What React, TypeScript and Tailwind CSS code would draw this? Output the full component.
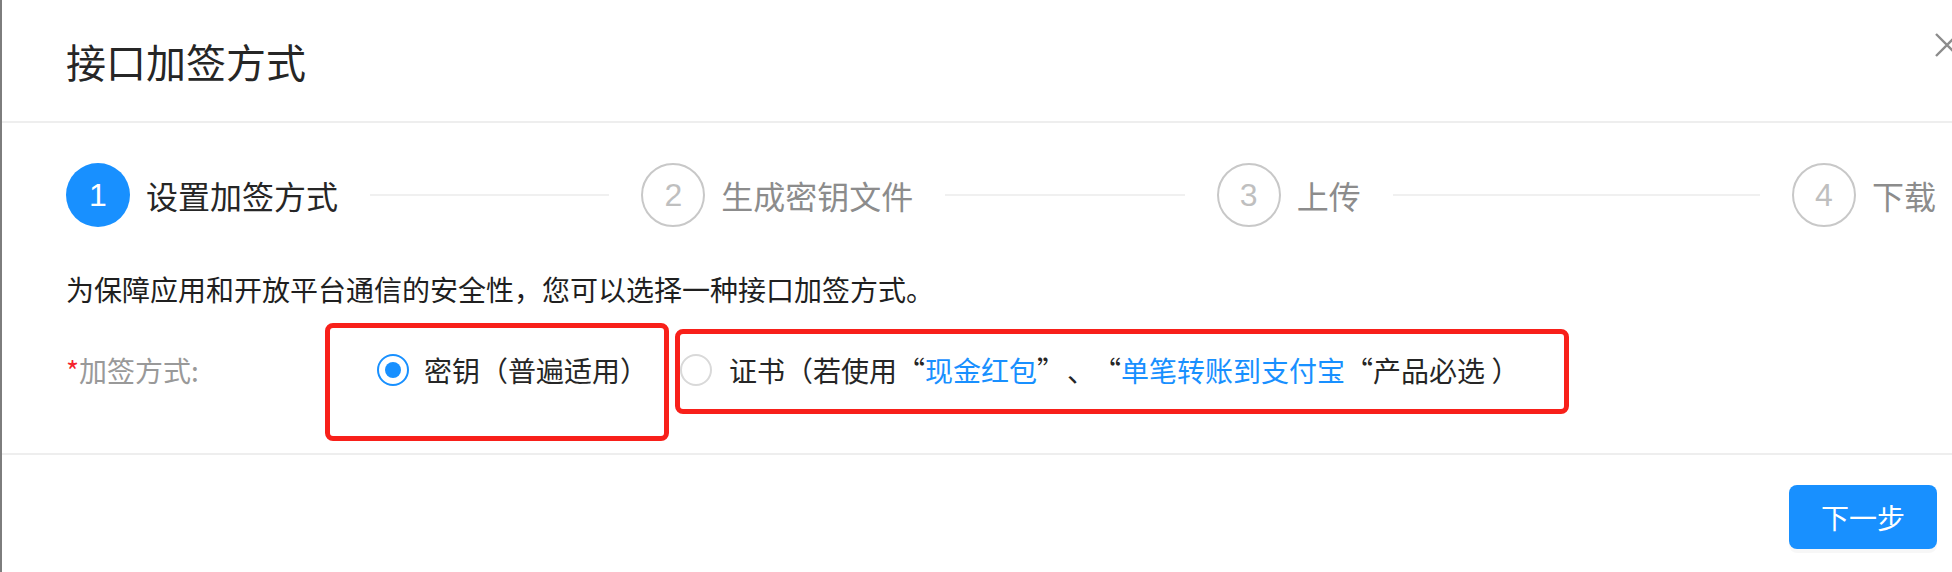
import React from "react";

const steps = [
  { n: "1", title: "设置加签方式", active: true },
  { n: "2", title: "生成密钥文件", active: false },
  { n: "3", title: "上传", active: false },
  { n: "4", title: "下载", active: false },
];

function StepItem({ n, title, active, last }: { n: string; title: string; active: boolean; last: boolean }) {
  return (
    <div className={last ? "flex flex-none items-center" : "flex flex-1 items-center mr-[32px] overflow-hidden"}>
      <div
        className={
          active
            ? "w-[64px] h-[64px] shrink-0 rounded-full bg-[#1890ff] flex items-center justify-center text-white"
            : "w-[64px] h-[64px] shrink-0 rounded-full border-[2px] border-[#c8c8c8] flex items-center justify-center text-[#bfbfbf]"
        }
      >
        <span className="font-['Liberation_Sans',sans-serif] text-[32px] leading-[32px] font-light">{n}</span>
      </div>
      <span
        className={
          active
            ? "ml-[16px] text-[32px] leading-[48px] text-[#262626] whitespace-nowrap"
            : "ml-[16px] text-[32px] leading-[48px] text-[#8c8c8c] whitespace-nowrap"
        }
      >
        {title}
      </span>
      {!last && <div className="ml-[32px] flex-1 h-[2px] bg-[#f0f0f0]" />}
    </div>
  );
}

export default function App() {
  return (
    <div className="relative w-[1952px] h-[572px] overflow-hidden bg-white font-['Noto_Sans_CJK_SC','Noto_Sans',sans-serif]">
      <div className="w-[2000px] border-l-[2px] border-[#7d7d7d] bg-white">
        {/* header */}
        <div className="h-[123px] px-[64px] flex items-center border-b-[2px] border-[#eeeeee]">
          <span className="text-[40px] leading-[56px] text-[#262626]">接口加签方式</span>
        </div>

        {/* body */}
        <div className="px-[64px] pt-[40px] pb-[51px] border-b-[2px] border-[#eeeeee] flex flex-col">
          <div className="flex items-center h-[64px]">
            {steps.map((s, i) => (
              <StepItem key={s.n} n={s.n} title={s.title} active={s.active} last={i === steps.length - 1} />
            ))}
          </div>

          <div className="mt-[41px] text-[28px] leading-[42px] text-[#1f1f1f] whitespace-nowrap">
            为保障应用和开放平台通信的安全性，您可以选择一种接口加签方式。
          </div>

          <div className="mt-[28px] h-[64px] flex items-center">
            <div className="w-[311px] shrink-0 text-[28px] leading-[42px] text-[#999999] whitespace-nowrap">
              <span className="text-[#f5222d]">*</span>加签方式:
            </div>
            <div className="flex items-center">
              <span className="w-[32px] h-[32px] rounded-full border-[2px] border-[#1890ff] flex items-center justify-center shrink-0">
                <span className="w-[16px] h-[16px] rounded-full bg-[#1890ff]" />
              </span>
              <span className="ml-[15px] text-[28px] leading-[42px] text-[#262626] whitespace-nowrap">密钥（普遍适用）</span>
            </div>
            <div className="ml-[32px] flex items-center">
              <span className="w-[32px] h-[32px] rounded-full border-[2px] border-[#d9d9d9] shrink-0 bg-white" />
              <span className="ml-[17px] text-[28px] leading-[42px] text-[#262626] whitespace-nowrap">
                证书（若使用“<span className="text-[#1890ff]">现金红包</span>”<span className="ml-[16px]">、</span>
                <span className="ml-[12px]">“</span>
                <span className="text-[#1890ff]">单笔转账到支付宝</span>“产品必选 ）
              </span>
            </div>
          </div>
        </div>

        {/* footer */}
        <div className="px-[64px] pt-[30px] h-[140px] flex justify-end items-start">
          <button className="w-[148px] h-[64px] rounded-[8px] bg-[#1890ff] text-white text-[28px] leading-[42px] shadow-[0_4px_0_rgba(0,0,0,0.03)] mr-[-1px]">
            下一步
          </button>
        </div>
      </div>

      {/* close icon */}
      <svg className="absolute left-[1935px] top-[33px]" width="24" height="24" viewBox="0 0 24 24">
        <path d="M1 1 L23 23 M23 1 L1 23" stroke="#8c8c8c" strokeWidth="2.4" fill="none" />
      </svg>

      {/* red annotation boxes */}
      <div className="absolute left-[325px] top-[323px] w-[344px] h-[118px] border-[5px] border-[#f8201a] rounded-[8px]" />
      <div className="absolute left-[675px] top-[329px] w-[894px] h-[85px] border-[5px] border-[#f8201a] rounded-[8px]" />
    </div>
  );
}
